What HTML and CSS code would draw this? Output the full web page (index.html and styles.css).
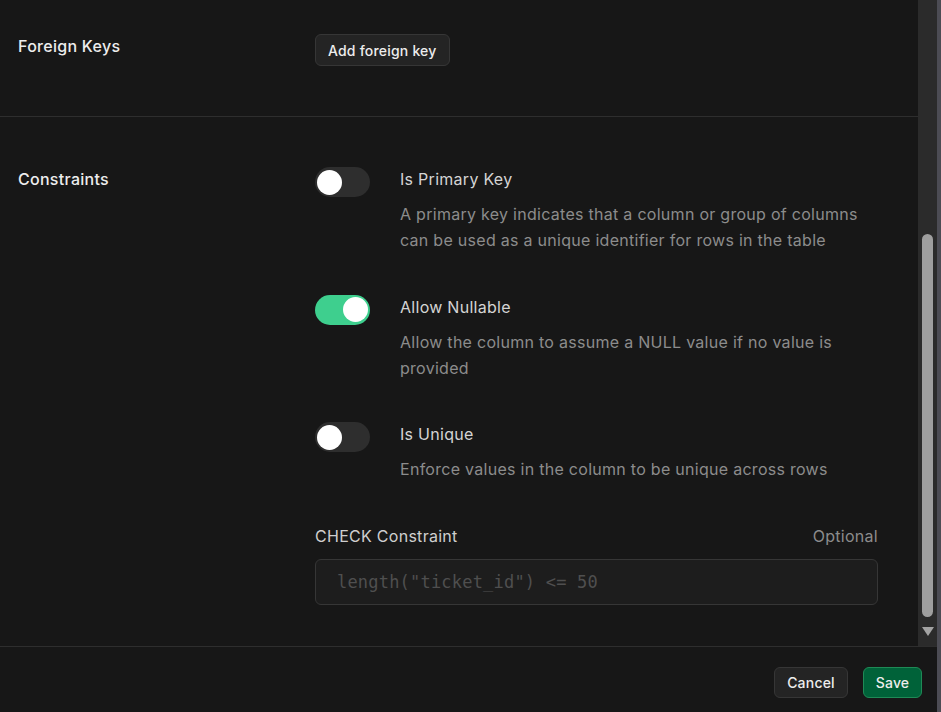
FILE: index.html
```html
<!DOCTYPE html>
<html>
<head>
<meta charset="utf-8">
<link rel="stylesheet" href="styles.css">
</head>
<body>
<div class="window">
  <div class="app">
    <div class="scroll">
      <div class="content">
        <section class="section first">
          <div class="label">Foreign Keys</div>
          <div class="field">
            <button class="btn">Add foreign key</button>
          </div>
        </section>
        <section class="section second">
          <div class="label">Constraints</div>
          <div class="field rows">
            <div class="row">
              <div class="toggle"><span class="knob"></span></div>
              <div class="text">
                <div class="title">Is Primary Key</div>
                <div class="desc">A primary key indicates that a column or group of columns can be used as a unique identifier for rows in the table</div>
              </div>
            </div>
            <div class="row">
              <div class="toggle on"><span class="knob"></span></div>
              <div class="text">
                <div class="title">Allow Nullable</div>
                <div class="desc">Allow the column to assume a NULL value if no value is provided</div>
              </div>
            </div>
            <div class="row">
              <div class="toggle"><span class="knob"></span></div>
              <div class="text">
                <div class="title">Is Unique</div>
                <div class="desc">Enforce values in the column to be unique across rows</div>
              </div>
            </div>
            <div class="check">
              <div class="check-head">
                <span class="check-label">CHECK Constraint</span>
                <span class="optional">Optional</span>
              </div>
              <input class="input" type="text" placeholder="length(&quot;ticket_id&quot;) <= 50">
            </div>
          </div>
        </section>
      </div>
      <div class="scrollbar">
        <div class="thumb"></div>
        <div class="arrow"></div>
      </div>
    </div>
    <div class="footer">
      <button class="btn cancel">Cancel</button>
      <button class="btn save">Save</button>
    </div>
  </div>
  <div class="edge"></div>
</div>
</body>
</html>
```

FILE: styles.css
```css
* { box-sizing: border-box; }
html, body { margin: 0; padding: 0; background: #171717; }
body {
  font-family: "Inter", "Noto Sans", sans-serif;
  color: #ededed;
  width: 941px;
  height: 712px;
  overflow: hidden;
  letter-spacing: 0.28px;
}
.window { display: flex; width: 941px; height: 712px; }
.app { flex: 1; display: flex; flex-direction: column; min-width: 0; }
.edge { width: 4px; background: #4c4c54; }
.scroll { height: 646px; display: flex; }
.content { flex: 1; min-width: 0; overflow: hidden; }
.scrollbar {
  width: 19px;
  background: #2b2b2b;
  display: flex;
  flex-direction: column;
  align-items: center;
  padding-top: 234px;
}
.thumb { width: 11px; height: 383px; background: #9f9f9f; border-radius: 6px; }
.arrow {
  margin-top: 10px;
  width: 0; height: 0;
  border-left: 6px solid transparent;
  border-right: 6px solid transparent;
  border-top: 9px solid #a3a3a3;
}
.section { display: flex; padding-left: 18px; padding-right: 40px; }
.section.first { height: 117px; padding-top: 34px; border-bottom: 1px solid #2e2e2e; }
.section.second { padding-top: 50px; }
.label { width: 297px; font-size: 16px; line-height: 24px; color: #ededed; font-weight: 500; }
.field { flex: 1; }
.btn {
  font-family: "Inter", "Noto Sans", sans-serif;
  font-size: 14px;
  font-weight: 500;
  letter-spacing: 0.2px;
  color: #ededed;
  background: #242424;
  border: 1px solid #363636;
  border-radius: 6px;
  height: 32px;
  padding: 0 12px;
}
.rows { display: flex; flex-direction: column; gap: 41.5px; }
.row { display: flex; }
.toggle {
  width: 55px; height: 30px;
  border-radius: 15px;
  background: #2e2e2e;
  display: flex; align-items: center;
  padding-left: 2px;
  flex: none;
}
.knob { width: 25px; height: 25px; border-radius: 50%; background: #fff; display: block; }
.toggle.on { background: #3ecf8e; justify-content: flex-end; padding-left: 0; padding-right: 2px; }
.text { margin-left: 30px; flex: 1; }
.title { font-size: 16px; line-height: 24px; color: #d4d4d4; }
.desc { margin-top: 10px; font-size: 16px; line-height: 26px; color: #8c8c8c; }
.check-head { display: flex; justify-content: space-between; font-size: 16px; line-height: 24px; }
.check-label { color: #cfcfcf; }
.optional { color: #8c8c8c; }
.input {
  margin-top: 11px;
  width: 100%;
  height: 46px;
  background: #1d1d1d;
  border: 1px solid #363636;
  border-radius: 6px;
  padding: 0 21px;
  font-family: "DejaVu Sans Mono", monospace;
  font-size: 17px;
  letter-spacing: 0.2px;
  color: #ededed;
  outline: none;
}
.input::placeholder { color: #4f4f4f; }
.footer {
  flex: 1;
  border-top: 1px solid #2e2e2e;
  display: flex;
  justify-content: flex-end;
  align-items: flex-start;
  padding-top: 20px;
  padding-right: 15px;
  gap: 15px;
}
.cancel { width: 74px; height: 31px; padding: 0; }
.save { width: 59px; height: 31px; padding: 0; background: #006239; border-color: #1f8a56; }
```
